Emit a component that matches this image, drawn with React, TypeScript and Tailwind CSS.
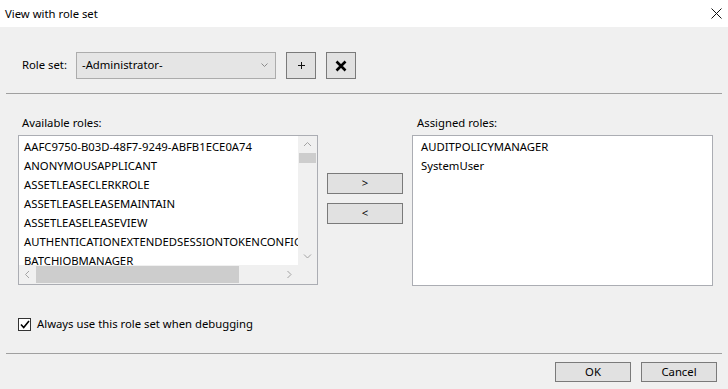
import React from 'react';

const available = [
  'AAFC9750-B03D-48F7-9249-ABFB1ECE0A74',
  'ANONYMOUSAPPLICANT',
  'ASSETLEASECLERKROLE',
  'ASSETLEASELEASEMAINTAIN',
  'ASSETLEASELEASEVIEW',
  'AUTHENTICATIONEXTENDEDSESSIONTOKENCONFIG',
  'BATCHJOBMANAGER',
];

const assigned = ['AUDITPOLICYMANAGER', 'SystemUser'];

function Chevron({ dir }: { dir: 'up' | 'down' | 'left' | 'right' }) {
  const d = {
    up: 'M1 5 L4.5 1.5 L8 5',
    down: 'M1 1.5 L4.5 5 L8 1.5',
    left: 'M5 1 L1.5 4.5 L5 8',
    right: 'M1.5 1 L5 4.5 L1.5 8',
  }[dir];
  const vertical = dir === 'up' || dir === 'down';
  return (
    <svg width={vertical ? 9 : 7} height={vertical ? 7 : 9} viewBox={vertical ? '0 0 9 7' : '0 0 7 9'} fill="none">
      <path d={d} stroke="#a3a3a3" strokeWidth="1" />
    </svg>
  );
}

function WinButton({ children, className = '' }: { children: React.ReactNode; className?: string }) {
  return (
    <button className={`flex items-center justify-center bg-[#e1e1e1] border border-[#7a7a7a] text-[11.3px] text-black ${className}`}>
      {children}
    </button>
  );
}

export default function App() {
  return (
    <div className="w-[728px] h-[389px] bg-[#f0f0f0] flex flex-col font-['Noto_Sans',sans-serif] text-[11.3px] text-black overflow-hidden">
      {/* title bar */}
      <div className="h-[27px] bg-white flex items-center justify-between pl-[5px] pr-[5px] shrink-0">
        <span className="leading-none">View with role set</span>
        <svg width="11" height="11" viewBox="0 0 11 11" className="mr-[1px]">
          <path d="M0.5 0.5 L10.5 10.5 M10.5 0.5 L0.5 10.5" stroke="#111" strokeWidth="1" />
        </svg>
      </div>

      {/* role set row */}
      <div className="flex items-center pl-[22px] pt-[25px] h-[52px] shrink-0">
        <span className="w-[54px]">Role set:</span>
        <div className="w-[200px] h-[27px] border border-[#acacac] bg-[#e5e5e5] flex items-center justify-between pl-[5px] pr-[7px]">
          <span>-Administrator-</span>
          <svg width="7" height="5" viewBox="0 0 7 5" fill="none">
            <path d="M0.5 0.5 L3.5 3.5 L6.5 0.5" stroke="#8a8a8a" strokeWidth="1" />
          </svg>
        </div>
        <WinButton className="ml-[10px] w-[30px] h-[27px]">
          <svg width="9" height="9" viewBox="0 0 9 9">
            <path d="M4.5 1 V8 M1 4.5 H8" stroke="#111" strokeWidth="1" />
          </svg>
        </WinButton>
        <WinButton className="ml-[10px] w-[30px] h-[27px]">
          <svg width="12" height="12" viewBox="0 0 12 12">
            <path d="M1.5 1.5 L10.5 10.5 M10.5 1.5 L1.5 10.5" stroke="#000" strokeWidth="2.6" />
          </svg>
        </WinButton>
      </div>

      <div className="mx-[6px] mt-[14px] h-px bg-[#a0a0a0] shrink-0" />

      {/* lists */}
      <div className="flex pt-[20px] pl-[18px] shrink-0">
        <div className="flex flex-col">
          <span className="pl-[4px] h-[21px] leading-[17px]">Available roles:</span>
          <div className="w-[300px] h-[150px] border border-[#abadb3] bg-[#f0f0f0] grid grid-cols-[279px_19px] grid-rows-[129px_19px]">
            <div className="bg-white overflow-hidden pt-[1px]">
              {available.map((r) => (
                <div key={r} className="h-[19px] leading-[19px] pl-[5px] whitespace-nowrap">{r}</div>
              ))}
            </div>
            <div className="flex flex-col items-center">
              <div className="h-[17px] flex items-center justify-center"><Chevron dir="up" /></div>
              <div className="h-[10px] w-[17px] bg-[#cdcdcd]" />
              <div className="flex-1" />
              <div className="h-[17px] flex items-center justify-center"><Chevron dir="down" /></div>
            </div>
            <div className="flex items-center">
              <div className="w-[17px] flex justify-center"><Chevron dir="left" /></div>
              <div className="w-[203px] h-[17px] bg-[#cdcdcd]" />
              <div className="flex-1" />
              <div className="w-[17px] flex justify-center"><Chevron dir="right" /></div>
            </div>
            <div />
          </div>
        </div>

        <div className="flex flex-col gap-[9px] ml-[9px] pt-[59px]">
          <WinButton className="w-[76px] h-[21px]">&gt;</WinButton>
          <WinButton className="w-[76px] h-[21px]">&lt;</WinButton>
        </div>

        <div className="flex flex-col ml-[9px]">
          <span className="pl-[5px] h-[21px] leading-[17px]">Assigned roles:</span>
          <div className="w-[301px] h-[151px] border border-[#abadb3] bg-white pt-[1px]">
            {assigned.map((r) => (
              <div key={r} className="h-[19px] leading-[19px] pl-[8px] whitespace-nowrap">{r}</div>
            ))}
          </div>
        </div>
      </div>

      {/* checkbox */}
      <div className="flex items-center pl-[18px] mt-[32px] h-[13px] shrink-0">
        <div className="w-[13px] h-[13px] border border-[#333] bg-white flex items-center justify-center">
          <svg width="10" height="9" viewBox="0 0 10 9" fill="none">
            <path d="M1 4.5 L3.7 7.5 L9 1" stroke="#000" strokeWidth="1.6" />
          </svg>
        </div>
        <span className="ml-[6px]">Always use this role set when debugging</span>
      </div>

      <div className="mx-[6px] mt-[22px] h-px bg-[#a0a0a0] shrink-0" />

      <div className="flex justify-end gap-[10px] pr-[11px] pt-[8px]">
        <WinButton className="w-[76px] h-[20px]">OK</WinButton>
        <WinButton className="w-[76px] h-[20px]">Cancel</WinButton>
      </div>
    </div>
  );
}
